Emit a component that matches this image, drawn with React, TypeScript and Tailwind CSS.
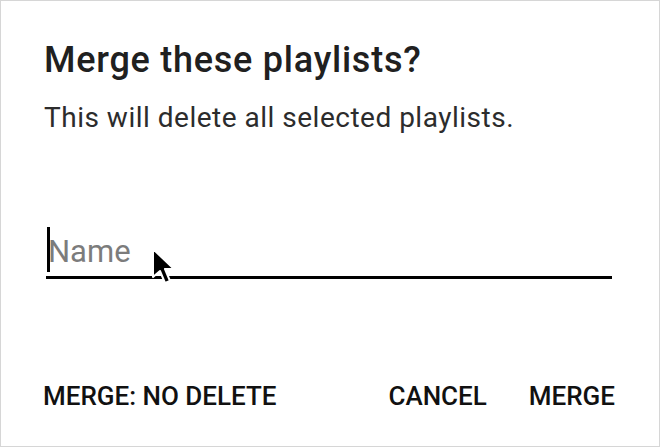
import React from "react";

function Pointer() {
  return (
    <svg
      className="absolute left-[150px] top-[247px]"
      width="26"
      height="40"
      viewBox="0 0 26 40"
    >
      <path
        d="M2 1 L2 29 L9 23 L14 35 L19 33 L14 21 L23 21 Z"
        fill="#000"
        stroke="#fff"
        strokeWidth="2"
        strokeLinejoin="round"
      />
    </svg>
  );
}

export default function App() {
  return (
    <div className="relative w-[660px] h-[447px] bg-white border border-[#d6d6d6] overflow-hidden font-['Roboto',sans-serif] text-[#202020]">
      <div className="flex flex-col h-full pl-[43px] pr-[47px]">
        <h1 className="mt-[38px] text-[36px] leading-[42px] font-medium tracking-[0.75px]">
          Merge these playlists?
        </h1>
        <p className="mt-[21px] text-[28px] leading-[32px] tracking-[0.5px] text-[#2c2c2c]">
          This will delete all selected playlists.
        </p>
        <div className="mt-[93px] ml-[2px] flex items-end border-b-[3px] border-black pb-[6px]">
          <span className="ml-[1px] w-[3px] h-[45px] bg-black mr-[-2px] mb-[-2px]" />
          <span className="text-[31px] leading-[36px] text-[#7c7c7c]">Name</span>
        </div>
        <div className="mt-auto mb-[35px] -ml-[1px] -mr-[3px] flex items-center text-[26px] font-medium leading-[30px] text-[#111]">
          <span>MERGE: NO DELETE</span>
          <span className="ml-auto">CANCEL</span>
          <span className="ml-[42px]">MERGE</span>
        </div>
      </div>
      <Pointer />
    </div>
  );
}
